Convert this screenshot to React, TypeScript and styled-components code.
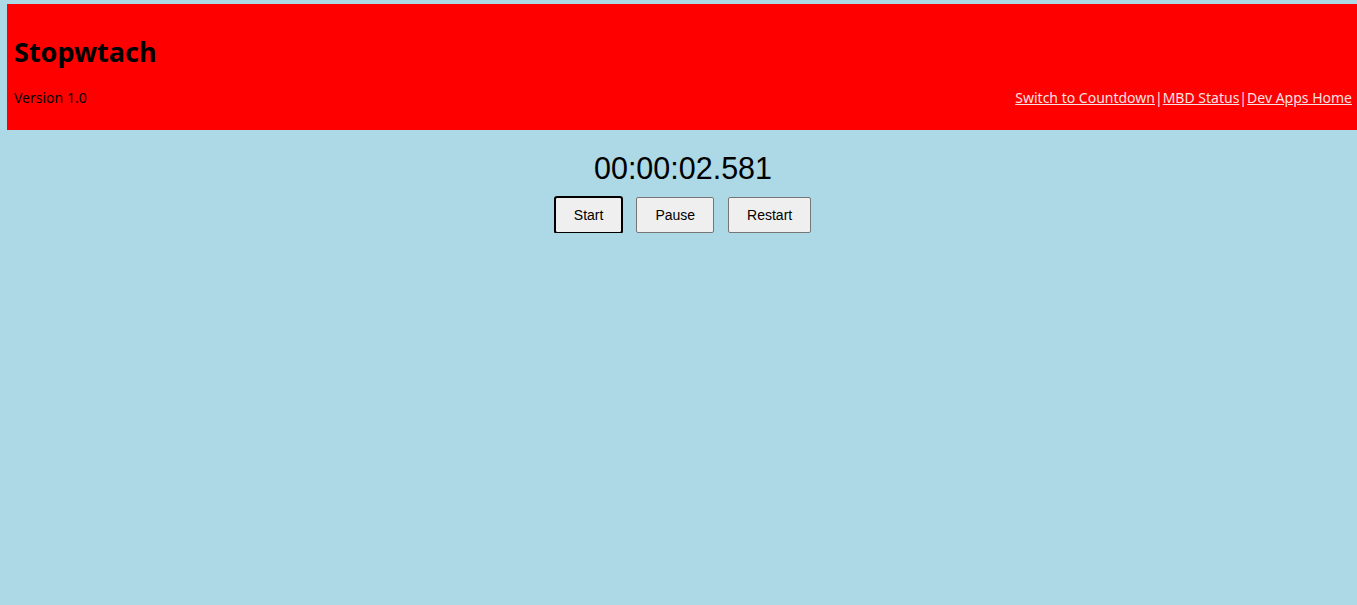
import React, { useState } from "react";
import styled, { createGlobalStyle } from "styled-components";

const GlobalStyle = createGlobalStyle`
  html, body {
    margin: 0;
    padding: 0;
    background: #add8e6;
    overflow: hidden;
  }
  body {
    font-family: "Comic Sans MS", "Noto Sans", sans-serif;
  }
`;

const Header = styled.header`
  margin: 4px 0 0 7px;
  height: 126px;
  background: #ff0000;
  padding: 0 5px 0 7px;
  display: flex;
  flex-direction: column;
`;

const Title = styled.h1`
  margin: 0;
  padding-top: 31px;
  height: 40px;
  font-size: 27px;
  font-weight: 700;
  line-height: 34px;
  color: #000;
`;

const InfoRow = styled.div`
  margin-top: 13px;
  display: flex;
  justify-content: space-between;
  align-items: center;
  font-size: 14px;
  line-height: 20px;
`;

const Version = styled.span`
  color: #000;
`;

const Links = styled.nav`
  color: #fbe2e2;
  font-size: 14px;
`;

const Link = styled.a`
  color: #fbe2e2;
  text-decoration: underline;
`;

const Main = styled.main`
  display: flex;
  flex-direction: column;
  align-items: center;
  padding: 20px 0 0 9px;
`;

const Timer = styled.div`
  font-family: "Liberation Sans", Arial, sans-serif;
  font-size: 30.5px;
  line-height: 36px;
  color: #000;
`;

const Buttons = styled.div`
  margin-top: 11px;
  display: flex;
  gap: 14px;
`;

const Button = styled.button<{ $focused?: boolean }>`
  height: 36px;
  padding: 0 18px;
  font-family: "Liberation Sans", Arial, sans-serif;
  font-size: 14px;
  color: #000;
  background: #efefef;
  border: 1px solid #767676;
  border-radius: 2px;
  outline: ${(p) => (p.$focused ? "2px solid #000" : "none")};
  outline-offset: -1px;
  cursor: pointer;
`;

const App = () => {
  const [time] = useState("00:00:02.581");
  return (
    <>
      <GlobalStyle />
      <Header>
        <Title>Stopwtach</Title>
        <InfoRow>
          <Version>Version 1.0</Version>
          <Links>
            <Link href="#">Switch to Countdown</Link>|
            <Link href="#">MBD Status</Link>|
            <Link href="#">Dev Apps Home</Link>
          </Links>
        </InfoRow>
      </Header>
      <Main>
        <Timer>{time}</Timer>
        <Buttons>
          <Button $focused>Start</Button>
          <Button>Pause</Button>
          <Button>Restart</Button>
        </Buttons>
      </Main>
    </>
  );
};

export default App;
